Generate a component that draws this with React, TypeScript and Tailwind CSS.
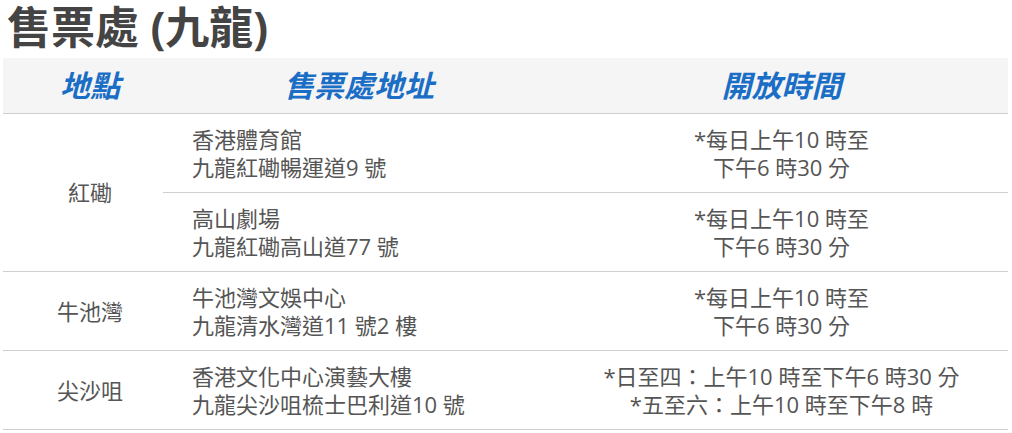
import React from "react";

const body = {
  fontFamily: '"Open Sans", "Noto Sans CJK TC", sans-serif',
};

function Addr({ a, b }: { a: string; b: string }) {
  return (
    <div className="flex flex-col justify-center pl-[29px] text-[22px] leading-[28px] text-[#555]">
      <div>{a}</div>
      <div>{b}</div>
    </div>
  );
}

function Hours({ a, b }: { a: string; b: string }) {
  return (
    <div className="flex flex-col items-center justify-center text-[22px] leading-[28px] text-[#555]">
      <div>{a}</div>
      <div>{b}</div>
    </div>
  );
}

export default function App() {
  const cell = "border-b border-[#cfcfcf] h-[79px]";
  return (
    <div className="w-[1012px] h-[433px] bg-white overflow-hidden" style={body}>
      <h1 className="h-[58px] pl-[7px] text-[44px] leading-[54px] font-bold text-[#444] whitespace-nowrap">
        售票處 (九龍)
      </h1>
      <div className="ml-[3px] w-[1005px] grid grid-cols-[160px_392px_1fr]">
        <div className="col-span-3 grid grid-cols-[160px_392px_1fr] h-[56px] bg-[#f5f5f5] border-b border-[#cfcfcf] text-[30px] font-bold italic text-[#1b6ec5] items-center">
          <div className="pl-[14px] text-center">地點</div>
          <div className="text-center">售票處地址</div>
          <div className="text-center">開放時間</div>
        </div>

        <div className="row-span-2 flex items-center justify-center pl-[14px] border-b border-[#cfcfcf] text-[22px] text-[#555]">
          紅磡
        </div>
        <div className={`${cell} flex`}>
          <Addr a="香港體育館" b="九龍紅磡暢運道9 號" />
        </div>
        <div className={`${cell} flex justify-center`}>
          <Hours a="*每日上午10 時至" b="下午6 時30 分" />
        </div>
        <div className={`${cell} flex`}>
          <Addr a="高山劇場" b="九龍紅磡高山道77 號" />
        </div>
        <div className={`${cell} flex justify-center`}>
          <Hours a="*每日上午10 時至" b="下午6 時30 分" />
        </div>

        <div className={`${cell} flex items-center justify-center pl-[14px] text-[22px] text-[#555]`}>
          牛池灣
        </div>
        <div className={`${cell} flex`}>
          <Addr a="牛池灣文娛中心" b="九龍清水灣道11 號2 樓" />
        </div>
        <div className={`${cell} flex justify-center`}>
          <Hours a="*每日上午10 時至" b="下午6 時30 分" />
        </div>

        <div className={`${cell} flex items-center justify-center pl-[14px] text-[22px] text-[#555]`}>
          尖沙咀
        </div>
        <div className={`${cell} flex`}>
          <Addr a="香港文化中心演藝大樓" b="九龍尖沙咀梳士巴利道10 號" />
        </div>
        <div className={`${cell} flex justify-center`}>
          <Hours a="*日至四：上午10 時至下午6 時30 分" b="*五至六：上午10 時至下午8 時" />
        </div>
      </div>
    </div>
  );
}
